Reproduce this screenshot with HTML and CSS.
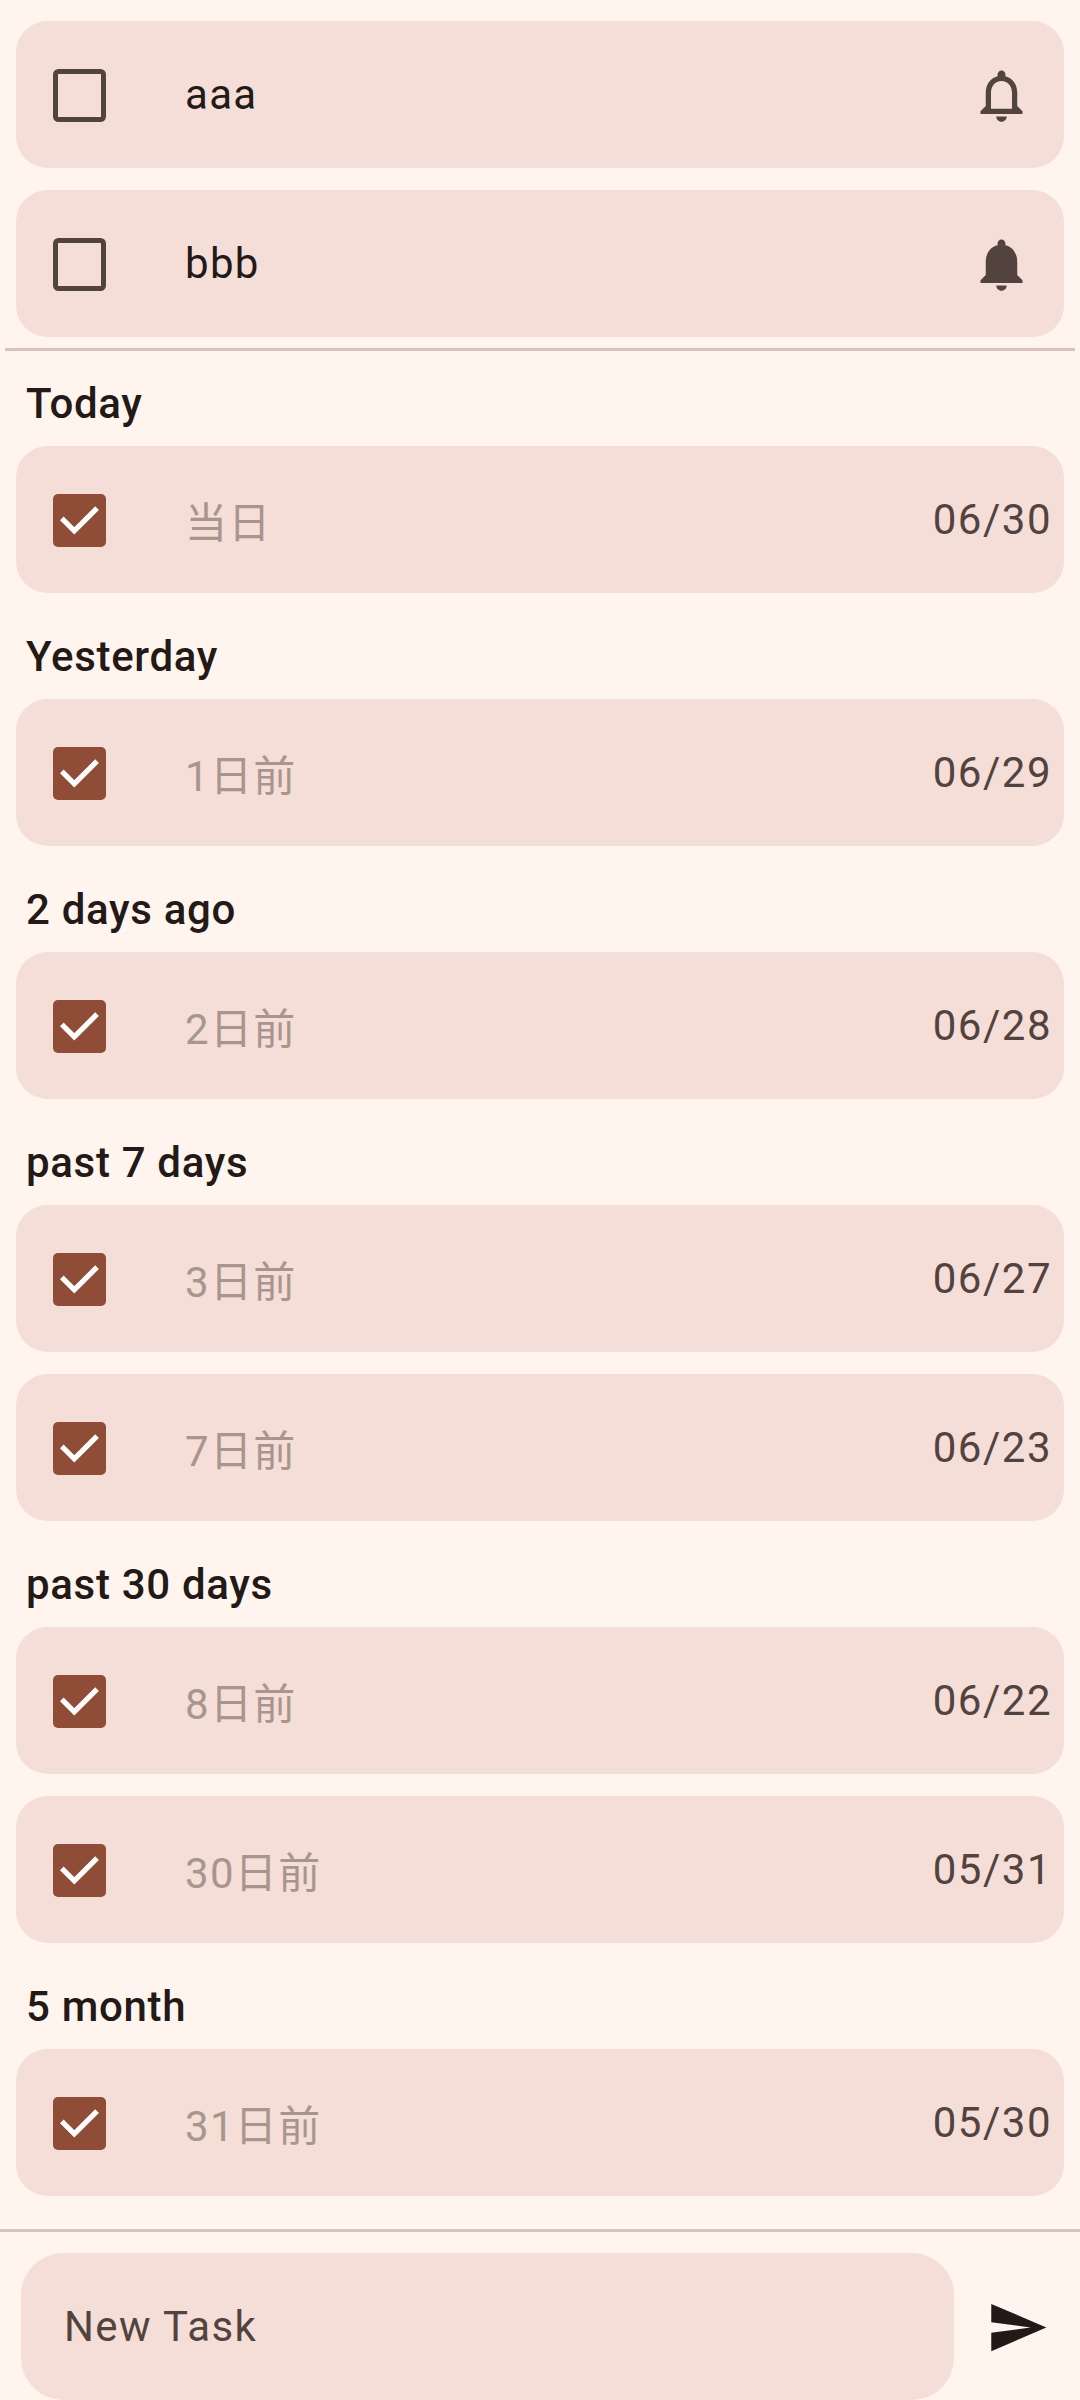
FILE: index.html
```html
<!DOCTYPE html>
<html lang="en">
<head>
<meta charset="utf-8">
<title>Tasks</title>
<link rel="stylesheet" href="styles.css">
</head>
<body>
<svg class="defs" width="0" height="0">
  <symbol id="box" viewBox="0 0 53 53"><rect x="2.5" y="2.5" width="48" height="48" rx="3" fill="none" stroke="currentColor" stroke-width="5"/></symbol>
  <symbol id="checked" viewBox="0 0 53 53"><rect width="53" height="53" rx="5" fill="currentColor"/><path d="M10.7 26.3 21.3 36.8 42.2 16" fill="none" stroke="#fff" stroke-width="5.25" stroke-linecap="square"/></symbol>
</svg>
<main class="screen">
  <section class="list open">
    <div class="card"><svg class="check"><use href="#box"/></svg><span class="name">aaa</span>
      <svg class="bell" viewBox="0 0 24 24"><path d="M12 22c1.1 0 2-.9 2-2h-4c0 1.1.9 2 2 2zm6-6v-5c0-3.07-1.63-5.64-4.5-6.32V4c0-.83-.67-1.5-1.5-1.5s-1.5.67-1.5 1.5v.68C7.64 5.36 6 7.92 6 11v5l-2 2v1h16v-1l-2-2zm-2 1H8v-6c0-2.48 1.51-4.5 4-4.5s4 2.02 4 4.5v6z"/></svg></div>
    <div class="card"><svg class="check"><use href="#box"/></svg><span class="name">bbb</span>
      <svg class="bell" viewBox="0 0 24 24"><path d="M12 22c1.1 0 2-.9 2-2h-4c0 1.1.89 2 2 2zm6-6v-5c0-3.07-1.64-5.64-4.5-6.32V4c0-.83-.67-1.5-1.5-1.5s-1.5.67-1.5 1.5v.68C7.63 5.36 6 7.92 6 11v5l-2 2v1h16v-1l-2-2z"/></svg></div>
  </section>
  <hr class="rule inset">
  <section class="list">
    <h2 class="heading first">Today</h2>
    <div class="card done"><svg class="check"><use href="#checked"/></svg><span class="name">当日</span><span class="date">06/30</span></div>
    <h2 class="heading">Yesterday</h2>
    <div class="card done"><svg class="check"><use href="#checked"/></svg><span class="name">1日前</span><span class="date">06/29</span></div>
    <h2 class="heading">2 days ago</h2>
    <div class="card done"><svg class="check"><use href="#checked"/></svg><span class="name">2日前</span><span class="date">06/28</span></div>
    <h2 class="heading">past 7 days</h2>
    <div class="card done"><svg class="check"><use href="#checked"/></svg><span class="name">3日前</span><span class="date">06/27</span></div>
    <div class="card done"><svg class="check"><use href="#checked"/></svg><span class="name">7日前</span><span class="date">06/23</span></div>
    <h2 class="heading">past 30 days</h2>
    <div class="card done"><svg class="check"><use href="#checked"/></svg><span class="name">8日前</span><span class="date">06/22</span></div>
    <div class="card done"><svg class="check"><use href="#checked"/></svg><span class="name">30日前</span><span class="date">05/31</span></div>
    <h2 class="heading">5 month</h2>
    <div class="card done"><svg class="check"><use href="#checked"/></svg><span class="name">31日前</span><span class="date">05/30</span></div>
  </section>
  <hr class="rule">
  <footer class="composer">
    <div class="field">New Task</div>
    <svg class="send" viewBox="0 0 24 24"><path d="M2.01 21 23 12 2.01 3 2 10l15 2-15 2z"/></svg>
  </footer>
</main>
</body>
</html>
```
FILE: styles.css
```css
* { box-sizing: border-box; }
body {
  margin: 0;
  background: #fff5ee;
  color: #231917;
  font-family: Roboto, "Noto Sans CJK JP", sans-serif;
  font-size: 42px;
  line-height: 63px;
  letter-spacing: 1.3125px;
}
.defs { display: block; position: absolute; }
.screen {
  display: flex;
  flex-direction: column;
  width: 1080px;
  height: 2400px;
  overflow: hidden;
}
.list { padding: 0 16px; }
.open { padding-top: 21px; padding-bottom: 11px; }
.card {
  display: flex;
  align-items: center;
  height: 147px;
  padding: 0 11px 0 37px;
  border-radius: 31.5px;
  background: #f5ded8;
}
.card + .card { margin-top: 22px; }
.check {
  width: 53px;
  height: 53px;
  flex: none;
  margin-top: 1px;
  color: #53433f;
}
.done .check { color: #8f4c37; }
.name { flex: 1; margin-left: 79px; }
.done .name { color: #a8968e; padding-top: 8px; }
.date { color: #53433f; letter-spacing: 1.5px; margin-right: 1px; }
.bell {
  width: 63px;
  height: 63px;
  margin-right: 20px;
  margin-top: 1px;
  fill: #53433f;
}
.rule {
  width: 100%;
  height: 3px;
  margin: 0;
  border: 0;
  background: #d8c2bc;
}
.inset { width: 1070px; margin: 0 5px; }
.heading {
  height: 106px;
  margin: 0;
  padding: 32px 0 0 10px;
  font-size: 42px;
  font-weight: 500;
  letter-spacing: 0.68px;
}
.first { height: 95px; padding-top: 21px; }
.list + .rule:not(.inset) { margin-top: 33px; }
.composer {
  display: flex;
  align-items: center;
  padding: 21px 31px 0 21px;
}
.field {
  width: 933px;
  height: 147px;
  padding: 42px 43px;
  border-radius: 42px;
  background: #f5ded8;
  color: #53433f;
  letter-spacing: 1.4px;
}
.send {
  width: 63px;
  height: 63px;
  margin: 2px 0 0 32px;
  fill: #231917;
}
```
